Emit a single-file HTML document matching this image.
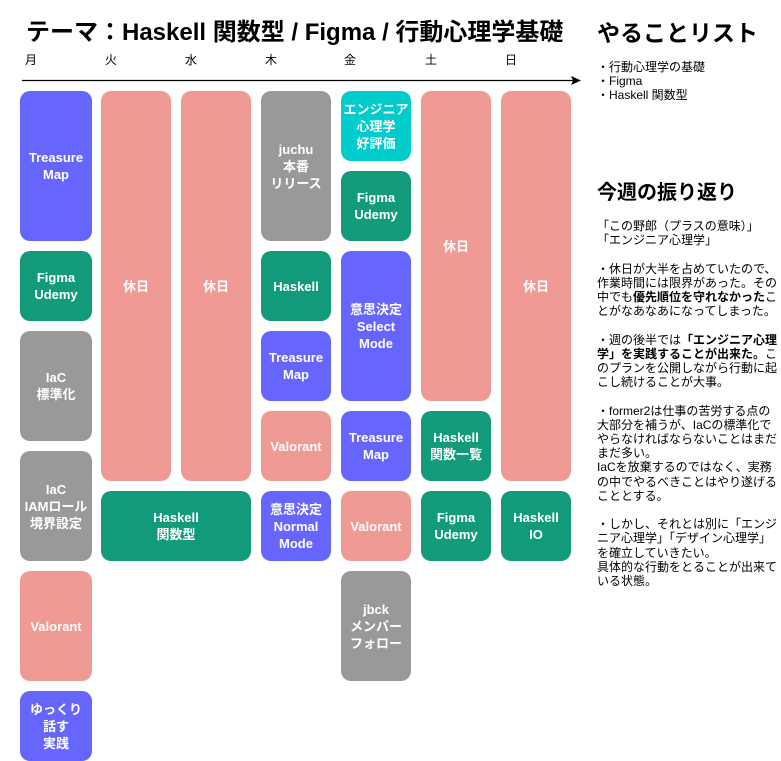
<!DOCTYPE html>
<html><head><meta charset="utf-8"><style>
body{margin:0;width:781px;height:761px;background:#fff;position:relative;overflow:hidden;font-family:"Liberation Sans","Noto Sans CJK JP",sans-serif;color:#000}
.a{position:absolute}
.b{position:absolute;border-radius:10px;color:#fff;font-weight:bold;font-size:13px;line-height:17px;display:flex;align-items:center;justify-content:center;text-align:center}
.p{background:#6666ff}.s{background:#f09a96}.g{background:#119b7b}.y{background:#999999}.c{background:#00cccc}
.d{position:absolute;top:51px;font-size:12px}
.t{font-size:12px;line-height:14.2px}
</style></head><body>
<div class="a" style="left:26px;top:12px;font-size:24px;font-weight:bold;white-space:nowrap">テーマ：Haskell 関数型 / Figma / 行動心理学基礎</div>
<div class="a" style="left:597px;top:14px;font-size:23px;font-weight:bold">やることリスト</div>
<div class="d" style="left:25px">月</div><div class="d" style="left:105px">火</div><div class="d" style="left:185px">水</div><div class="d" style="left:265px">木</div><div class="d" style="left:344px">金</div><div class="d" style="left:425px">土</div><div class="d" style="left:505px">日</div>
<svg class="a" style="left:20px;top:74px" width="565" height="14"><line x1="2" y1="6.5" x2="555" y2="6.5" stroke="#000" stroke-width="1.3"/><path d="M551 2 L561 6.5 L551 11 L553 6.5Z" fill="#000"/></svg>
<div class="a t" style="left:597px;top:60px">・行動心理学の基礎<br>・Figma<br>・Haskell 関数型</div>
<div class="a" style="left:597px;top:176px;font-size:20px;font-weight:bold">今週の振り返り</div>
<div class="a t" style="left:597px;top:219px;width:184px">「この野郎（プラスの意味）」<br>「エンジニア心理学」<br><br>・休日が大半を占めていたので、作業時間には限界があった。その中でも<b>優先順位を守れなかった</b>ことがなあなあになってしまった。<br><br>・週の後半では<b>「エンジニア心理学」を実践することが出来た。</b>このプランを公開しながら行動に起こし続けることが大事。<br><br>・former2は仕事の苦労する点の大部分を補うが、IaCの標準化でやらなければならないことはまだまだ多い。<br>IaCを放棄するのではなく、実務の中でやるべきことはやり遂げることとする。<br><br>・しかし、それとは別に「エンジニア心理学」「デザイン心理学」を確立していきたい。<br>具体的な行動をとることが出来ている状態。</div>

<div class="b p" style="left:20px;top:91px;width:72px;height:150px">Treasure<br>Map</div>
<div class="b g" style="left:20px;top:251px;width:72px;height:70px">Figma<br>Udemy</div>
<div class="b y" style="left:20px;top:331px;width:72px;height:110px">IaC<br>標準化</div>
<div class="b y" style="left:20px;top:451px;width:72px;height:110px">IaC<br>IAMロール<br>境界設定</div>
<div class="b s" style="left:20px;top:571px;width:72px;height:110px">Valorant</div>
<div class="b p" style="left:20px;top:691px;width:72px;height:70px">ゆっくり<br>話す<br>実践</div>

<div class="b s" style="left:101px;top:91px;width:70px;height:390px">休日</div>
<div class="b s" style="left:181px;top:91px;width:70px;height:390px">休日</div>
<div class="b g" style="left:101px;top:491px;width:150px;height:70px">Haskell<br>関数型</div>

<div class="b y" style="left:261px;top:91px;width:70px;height:150px">juchu<br>本番<br>リリース</div>
<div class="b g" style="left:261px;top:251px;width:70px;height:70px">Haskell</div>
<div class="b p" style="left:261px;top:331px;width:70px;height:70px">Treasure<br>Map</div>
<div class="b s" style="left:261px;top:411px;width:70px;height:70px">Valorant</div>
<div class="b p" style="left:261px;top:491px;width:70px;height:70px">意思決定<br>Normal<br>Mode</div>

<div class="b c" style="left:341px;top:91px;width:70px;height:70px">エンジニア<br>心理学<br>好評価</div>
<div class="b g" style="left:341px;top:171px;width:70px;height:70px">Figma<br>Udemy</div>
<div class="b p" style="left:341px;top:251px;width:70px;height:150px">意思決定<br>Select<br>Mode</div>
<div class="b p" style="left:341px;top:411px;width:70px;height:70px">Treasure<br>Map</div>
<div class="b s" style="left:341px;top:491px;width:70px;height:70px">Valorant</div>
<div class="b y" style="left:341px;top:571px;width:70px;height:110px">jbck<br>メンバー<br>フォロー</div>

<div class="b s" style="left:421px;top:91px;width:70px;height:310px">休日</div>
<div class="b g" style="left:421px;top:411px;width:70px;height:70px">Haskell<br>関数一覧</div>
<div class="b g" style="left:421px;top:491px;width:70px;height:70px">Figma<br>Udemy</div>

<div class="b s" style="left:501px;top:91px;width:70px;height:390px">休日</div>
<div class="b g" style="left:501px;top:491px;width:70px;height:70px">Haskell<br>IO</div>
</body></html>
